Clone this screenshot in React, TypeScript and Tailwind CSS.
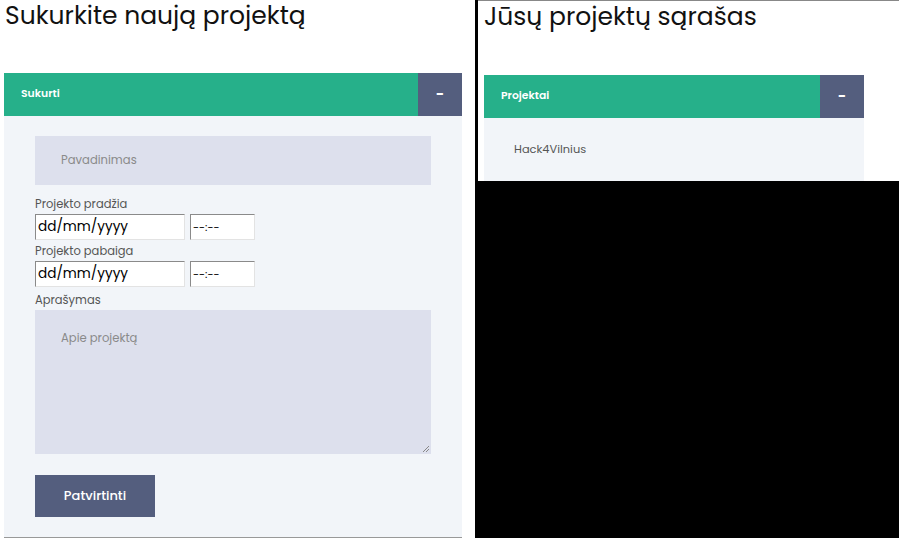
import React from 'react';

const font = { fontFamily: 'Poppins, Inter, "Noto Sans", sans-serif' };

const PanelHeader: React.FC<{ title: string }> = ({ title }) => (
  <div className="flex h-[43px]">
    <div className="flex-1 bg-[#26b08a] flex items-center pl-[17px] text-white text-[10.8px] font-semibold">
      {title}
    </div>
    <div className="w-[44px] bg-[#545e7e] flex items-center justify-center text-white text-[14px] font-bold">
      -
    </div>
  </div>
);

const DateTimeRow: React.FC = () => (
  <div className="flex gap-[5px]">
    <div className="w-[150px] h-[26px] bg-white border border-t-[#8a8a8a] border-l-[#8a8a8a] border-b-[#e3e3e3] border-r-[#e3e3e3] flex items-center pl-[2px] text-[13.6px] text-black">
      dd/mm/yyyy
    </div>
    <div className="w-[65px] h-[26px] bg-white border border-t-[#8a8a8a] border-l-[#8a8a8a] border-b-[#e3e3e3] border-r-[#e3e3e3] flex items-center pl-[2px] text-[11px] text-black">
      --:--
    </div>
  </div>
);

export default function App() {
  return (
    <div className="w-[899px] h-[538px] bg-black flex overflow-hidden" style={font}>
      {/* create project */}
      <div className="w-[475px] h-[538px] bg-white flex flex-col">
        <h1 className="text-[25px] leading-[32px] text-[#111] pl-[5px] h-[73px] whitespace-nowrap">Sukurkite naują projektą</h1>
        <div className="w-[458px] ml-[4px] flex-1 flex flex-col">
          <PanelHeader title="Sukurti" />
          <div className="flex-1 bg-[#f2f5f9] pl-[31px] pt-[20px] flex flex-col border-b border-[#999]">
            <div className="w-[396px] h-[49px] bg-[#dde0ed] flex items-center pl-[26px] text-[11.6px] text-[#8a8a8a]">
              Pavadinimas
            </div>
            <div className="text-[11.5px] text-[#555] mt-[10px] leading-[19px]">Projekto pradžia</div>
            <DateTimeRow />
            <div className="text-[11.5px] text-[#555] mt-[2px] leading-[19px]">Projekto pabaiga</div>
            <DateTimeRow />
            <div className="text-[11.5px] text-[#555] mt-[3px] leading-[20px]">Aprašymas</div>
            <div className="relative w-[396px] h-[144px] bg-[#dde0ed] pl-[26px] pt-[20px] text-[11.6px] text-[#8a8a8a]">
              Apie projektą
              <svg className="absolute right-[1px] bottom-[1px]" width="8" height="8" viewBox="0 0 8 8">
                <path d="M7 1L1 7M7 4L4 7" stroke="#888" strokeWidth="1" />
              </svg>
            </div>
            <button className="mt-[21px] w-[120px] h-[42px] bg-[#545e7e] text-white text-[13px] font-medium">
              Patvirtinti
            </button>
          </div>
        </div>
      </div>
      {/* project list */}
      <div className="ml-[3px] w-[421px] h-[181px] bg-white flex flex-col border-t border-[#888]">
        <h1 className="text-[25px] leading-[32px] text-[#111] pl-[6px] h-[74px] whitespace-nowrap">Jūsų projektų sąrašas</h1>
        <div className="w-[380px] ml-[6px] flex flex-col flex-1">
          <PanelHeader title="Projektai" />
          <div className="flex-1 bg-[#f2f5f9] pl-[30px] pt-[23px] text-[11.4px] text-[#555]">Hack4Vilnius</div>
        </div>
      </div>
    </div>
  );
}
